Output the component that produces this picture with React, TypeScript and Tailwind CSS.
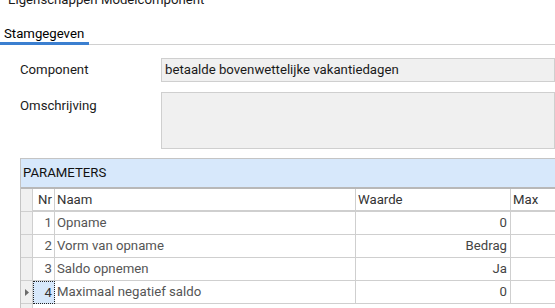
const rows = [
  { nr: 1, naam: "Opname", waarde: "0" },
  { nr: 2, naam: "Vorm van opname", waarde: "Bedrag" },
  { nr: 3, naam: "Saldo opnemen", waarde: "Ja" },
  { nr: 4, naam: "Maximaal negatief saldo", waarde: "0" },
];

export default function App() {
  return (
    <div className="h-[308px] w-[555px] overflow-hidden bg-white text-[13.2px] text-[#1a1a1a] [font-family:Roboto,'Liberation_Sans',sans-serif]">
      {/* window title, mostly scrolled off */}
      <div className="-mt-[8px] h-[16px] pl-[8px] leading-[16px]">Eigenschappen Modelcomponent</div>

      {/* tabs */}
      <div className="mt-[19px] flex border-b border-[#d0d0d0]">
        <div className="-mb-px h-[18px] w-[89px] border-b-[3px] border-[#3b7fd0] pl-[4px] leading-[14px] text-black">
          Stamgegeven
        </div>
      </div>

      {/* fields */}
      <div className="mt-[13px] grid grid-cols-[141px_1fr] gap-y-[10px] pl-[20px]">
        <div className="flex h-[24px] items-center">Component</div>
        <div className="flex h-[24px] items-center border border-[#cfcfcf] bg-[#f0f0f0] pl-[3px]">
          betaalde bovenwettelijke vakantiedagen
        </div>
        <div className="pt-[4px]">Omschrijving</div>
        <div className="h-[57px] border border-[#cfcfcf] bg-[#f0f0f0]" />
      </div>

      {/* parameters grid */}
      <div className="ml-[20px] mt-[9px] border-l border-t border-[#c4c4c4]">
        <div className="flex h-[28px] items-center bg-[#d7e8fb] pl-[2px] text-[#111]">PARAMETERS</div>
        <div className="grid grid-cols-[12px_22px_301px_155px_1fr] border-t-2 border-[#b8b8b8] text-[#555]">
          <div className="h-[23px] border-b border-r border-[#cfcfcf] bg-[#f0f0f0]" />
          <div className="flex h-[23px] items-center justify-end border-b-2 border-r border-[#cfcfcf] pr-[2px] text-[#333]">Nr</div>
          <div className="flex h-[23px] items-center border-b-2 border-r border-[#cfcfcf] pl-[2px] text-[#333]">Naam</div>
          <div className="flex h-[23px] items-center border-b-2 border-r border-[#cfcfcf] pl-[2px] text-[#333]">Waarde</div>
          <div className="flex h-[23px] items-center border-b-2 border-[#cfcfcf] pl-[2px] text-[#333]">Max</div>
          {rows.map((r) => {
            const cur = r.nr === 4;
            return (
              <div key={r.nr} className="contents">
                <div className="flex h-[23px] items-center justify-center border-b border-r border-[#cfcfcf] bg-[#f0f0f0]">
                  {cur && (
                    <svg width="4" height="7" viewBox="0 0 4 7">
                      <path d="M0 0 L4 3.5 L0 7 Z" fill="#6b6b6b" />
                    </svg>
                  )}
                </div>
                <div
                  className={
                    cur
                      ? "flex h-[23px] items-center justify-end border border-dotted border-[#222] bg-[#d7e8fb] pr-[2px] text-[#333]"
                      : "flex h-[23px] items-center justify-end border-b border-r border-[#cfcfcf] pr-[2px]"
                  }
                >
                  {r.nr}
                </div>
                <div className="flex h-[23px] items-center border-b border-r border-[#cfcfcf] pl-[2px]">{r.naam}</div>
                <div className="flex h-[23px] items-center justify-end border-b border-r border-[#cfcfcf] pr-[3px] text-[#444]">{r.waarde}</div>
                <div className="h-[23px] border-b border-[#cfcfcf]" />
              </div>
            );
          })}
          <div className="h-[10px] border-r border-[#cfcfcf] bg-[#f0f0f0]" />
        </div>
      </div>
    </div>
  );
}
